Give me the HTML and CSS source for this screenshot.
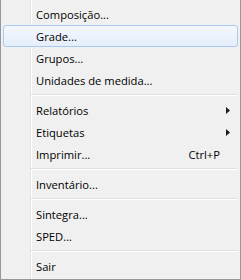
FILE: index.html
```html
<!DOCTYPE html>
<html lang="pt-BR">
<head>
    <meta charset="UTF-8">
    <title>Menu</title>
    <link rel="stylesheet" href="styles.css">
</head>
<body>
    <div class="menu">
        <div class="item">Composição...</div>
        <div class="item active">Grade...</div>
        <div class="item">Grupos...</div>
        <div class="item">Unidades de medida...</div>
        <div class="separator"></div>
        <div class="item">Relatórios
            <svg class="arrow" width="4" height="7" viewBox="0 0 4 7"><polygon points="0,0 4,3.5 0,7" fill="#1e1e1e"/></svg>
        </div>
        <div class="item">Etiquetas
            <svg class="arrow" width="4" height="7" viewBox="0 0 4 7"><polygon points="0,0 4,3.5 0,7" fill="#1e1e1e"/></svg>
        </div>
        <div class="item">Imprimir... <span class="shortcut">Ctrl+P</span></div>
        <div class="separator"></div>
        <div class="item">Inventário...</div>
        <div class="separator"></div>
        <div class="item">Sintegra...</div>
        <div class="item">SPED...</div>
        <div class="separator"></div>
        <div class="item">Sair</div>
    </div>
</body>
</html>
```

FILE: styles.css
```css
body {
    margin: 0;
    font-family: 'Open Sans', 'Noto Sans', sans-serif;
    font-size: 11.2px;
    color: #000;
}

.menu {
    width: 241px;
    height: 280px;
    box-sizing: border-box;
    padding: 3px 2px 2px 2px;
    border-left: 1px solid #979797;
    border-right: 1px solid #979797;
    border-bottom: 1px solid #979797;
    background:
        linear-gradient(to right, transparent 29px, #e2e3e3 29px, #e2e3e3 30px, #fff 30px, #fff 31px, transparent 31px),
        #f0f0f0;
}

.item {
    height: 22px;
    box-sizing: border-box;
    display: flex;
    align-items: center;
    padding-left: 32px;
    border: 1px solid transparent;
    border-radius: 3px;
}

.item.active {
    border-color: #a8cbf1;
    background: linear-gradient(to bottom, #f3f7fc, #e5eefa);
}

.shortcut {
    margin-left: auto;
    margin-right: 17px;
}

.arrow {
    margin-left: auto;
    margin-right: 7px;
}

.separator {
    height: 8px;
    margin: 0 1px 0 28px;
    display: flex;
    flex-direction: column;
    justify-content: center;
}

.separator::before {
    content: '';
    display: block;
    border-top: 1px solid #e0e0e0;
    border-bottom: 1px solid #fff;
}
```
